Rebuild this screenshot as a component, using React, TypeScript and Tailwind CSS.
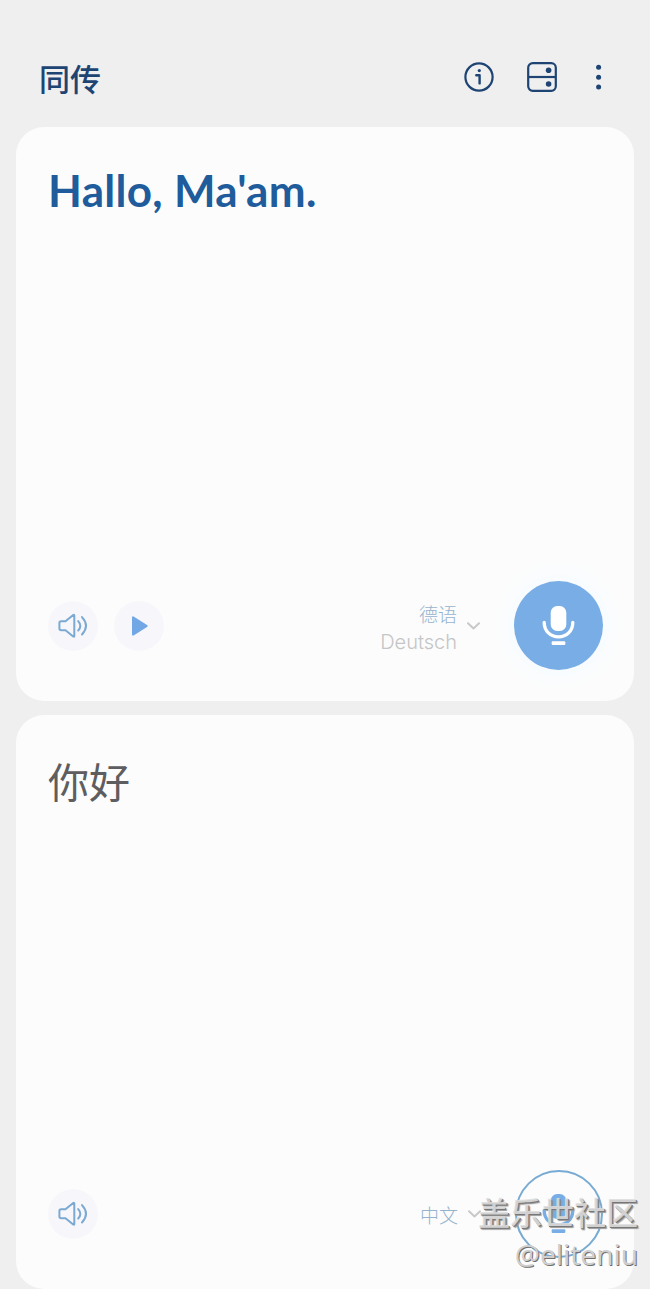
import type { ReactNode } from 'react'

interface PanelProps {
  children: ReactNode
  controls: ReactNode
  language: ReactNode
  mic: ReactNode
}

function InfoIcon() {
  return (
    <svg width="30" height="30" viewBox="0 0 30 30" fill="none" stroke="#1d4473" strokeWidth="2.2">
      <circle cx="15" cy="15" r="13.6" />
      <path d="M12.3 13.2h3.3v8.2" strokeWidth="2.4" strokeLinecap="round" strokeLinejoin="round" />
      <circle cx="15.3" cy="8.6" r="1.6" fill="#1d4473" stroke="none" />
    </svg>
  )
}

function SplitIcon() {
  return (
    <svg width="30" height="30" viewBox="0 0 30 30" fill="none" stroke="#1d4473" strokeWidth="2.2">
      <rect x="1.2" y="1.2" width="27.6" height="27.6" rx="4.5" />
      <path d="M1.2 15h27.6" />
      <circle cx="21.6" cy="8.3" r="2.8" fill="#1d4473" stroke="none" />
      <circle cx="21.6" cy="22" r="2.8" fill="#1d4473" stroke="none" />
    </svg>
  )
}

function MoreIcon() {
  return (
    <svg width="6" height="30" viewBox="0 0 6 30" fill="#1d4473">
      <circle cx="2.6" cy="5.2" r="2.5" />
      <circle cx="2.6" cy="15.2" r="2.5" />
      <circle cx="2.6" cy="25" r="2.5" />
    </svg>
  )
}

function SpeakerButton() {
  return (
    <button className="flex size-[50px] items-center justify-center rounded-full bg-[#f7f7fb]">
      <svg
        width="30"
        height="26"
        viewBox="0 0 30 26"
        fill="none"
        stroke="#7ba9d2"
        strokeWidth="2"
        strokeLinecap="round"
        strokeLinejoin="round"
      >
        <path d="M3.2 8.3h4.3L15.2 2q1.1-.7 1.1.6v20.3q0 1.3-1.1.6l-7.7-6.2H3.2Q1.4 17.3 1.4 15.5v-5.4Q1.4 8.3 3.2 8.3z" />
        <path d="M20.2 8.1q4.2 4.7 0 9.4" />
        <path d="M24 4.1q8 8.7 0 17.4" />
      </svg>
    </button>
  )
}

function PlayButton() {
  return (
    <button className="flex size-[50px] items-center justify-center rounded-full bg-[#f7f7fb]">
      <svg width="20" height="22" viewBox="0 0 20 22" fill="#70a7e4">
        <path d="M3 2.8Q3 .6 5 1.7l13 8.2q1.7 1.1 0 2.2l-13 8.2Q3 21.4 3 19.2z" />
      </svg>
    </button>
  )
}

function MicIcon({ color }: { color: string }) {
  return (
    <svg width="34" height="42" viewBox="0 0 34 42" fill="none">
      <rect x="8.7" y="1" width="15.6" height="25" rx="6.5" fill={color} />
      <path
        d="M2.2 17.5C2.2 26 8.5 31.8 16.5 31.8S30.8 26 30.8 17.5"
        stroke={color}
        strokeWidth="3.3"
        strokeLinecap="round"
      />
      <rect x="9.7" y="36.3" width="13.6" height="3.8" rx="1" fill={color} />
    </svg>
  )
}

function Chevron() {
  return (
    <svg width="13" height="8" viewBox="0 0 13 8" fill="none" stroke="#c8c9cb" strokeWidth="2">
      <path d="M1 1.2l5.500 5.200L12 1.200" strokeLinecap="round" strokeLinejoin="round" />
    </svg>
  )
}

function Panel({ children, controls, language, mic }: PanelProps) {
  return (
    <section className="flex h-[574px] flex-col justify-between rounded-[28px] bg-[#fcfcfc] pt-[33px] pr-[31px] pb-[31px] pl-8">
      {children}
      <div className="flex h-[89px] items-center">
        <div className="flex gap-4">{controls}</div>
        <div className="ml-auto flex items-center gap-2.5">
          {language}
          <Chevron />
        </div>
        <div className="ml-[34px]">{mic}</div>
      </div>
    </section>
  )
}

export default function App() {
  return (
    <div className="relative h-[1289px] w-[650px] overflow-hidden bg-[#efefef] font-['Inter','Noto_Sans_CJK_SC',sans-serif]">
      <header className="flex h-[127px] items-center pt-[27px] pr-[48px] pl-[39px]">
        <h1 className="pt-px font-['Noto_Sans_CJK_SC',sans-serif] text-[31px] leading-none font-medium text-[#1d4473]">
          同传
        </h1>
        <div className="ml-auto flex items-center">
          <InfoIcon />
          <div className="ml-[33px]">
            <SplitIcon />
          </div>
          <div className="ml-[39px]">
            <MoreIcon />
          </div>
        </div>
      </header>

      <main className="flex flex-col gap-3.5 px-4">
        <Panel
          controls={
            <>
              <SpeakerButton />
              <PlayButton />
            </>
          }
          language={
            <div className="flex flex-col items-end pt-[4px]">
              <span className="font-['Noto_Sans_CJK_SC',sans-serif] text-[19px] leading-7 font-light text-[#95b3ce]">德语</span>
              <span className="text-[20px] leading-7 font-light text-[#c4c5c7]">Deutsch</span>
            </div>
          }
          mic={
            <button className="flex size-[89px] items-center justify-center rounded-full bg-[#79ade5] shadow-[0_0_18px_10px_#f8fcff]">
              <MicIcon color="#ffffff" />
            </button>
          }
        >
          <p className="font-['Lato',sans-serif] text-[44px] leading-[60px] font-bold tracking-[0.3px] text-[#205c9b]">
            Hallo, Ma'am.
          </p>
        </Panel>

        <Panel
          controls={<SpeakerButton />}
          language={
            <span className="pt-0.5 font-['Noto_Sans_CJK_SC',sans-serif] text-[19px] leading-7 font-light text-[#95b3ce]">
              中文
            </span>
          }
          mic={
            <button className="flex size-[88px] items-center justify-center rounded-full border-2 border-[#78abd3]">
              <MicIcon color="#79ade5" />
            </button>
          }
        >
          <p className="pt-0.5 font-['Noto_Sans_CJK_SC',sans-serif] text-[41px] leading-[60px] text-[#5e5e60]">你好</p>
        </Panel>
      </main>

      {/* community watermark over the lower corner */}
      <div className="absolute right-3 bottom-4 flex flex-col items-end gap-1 whitespace-nowrap">
        <span className="font-['Noto_Sans_CJK_SC',sans-serif] text-[32px] leading-[40px] font-medium text-[#dededf]/90 [text-shadow:1px_1px_0_#777,2px_2px_1px_#999]">
          盖乐世社区
        </span>
        <span className="font-['Noto_Sans',sans-serif] text-[28px] leading-[38px] text-[#cfcfd0] [text-shadow:1px_1px_0_#707070]">
          @eliteniu
        </span>
      </div>
    </div>
  )
}
